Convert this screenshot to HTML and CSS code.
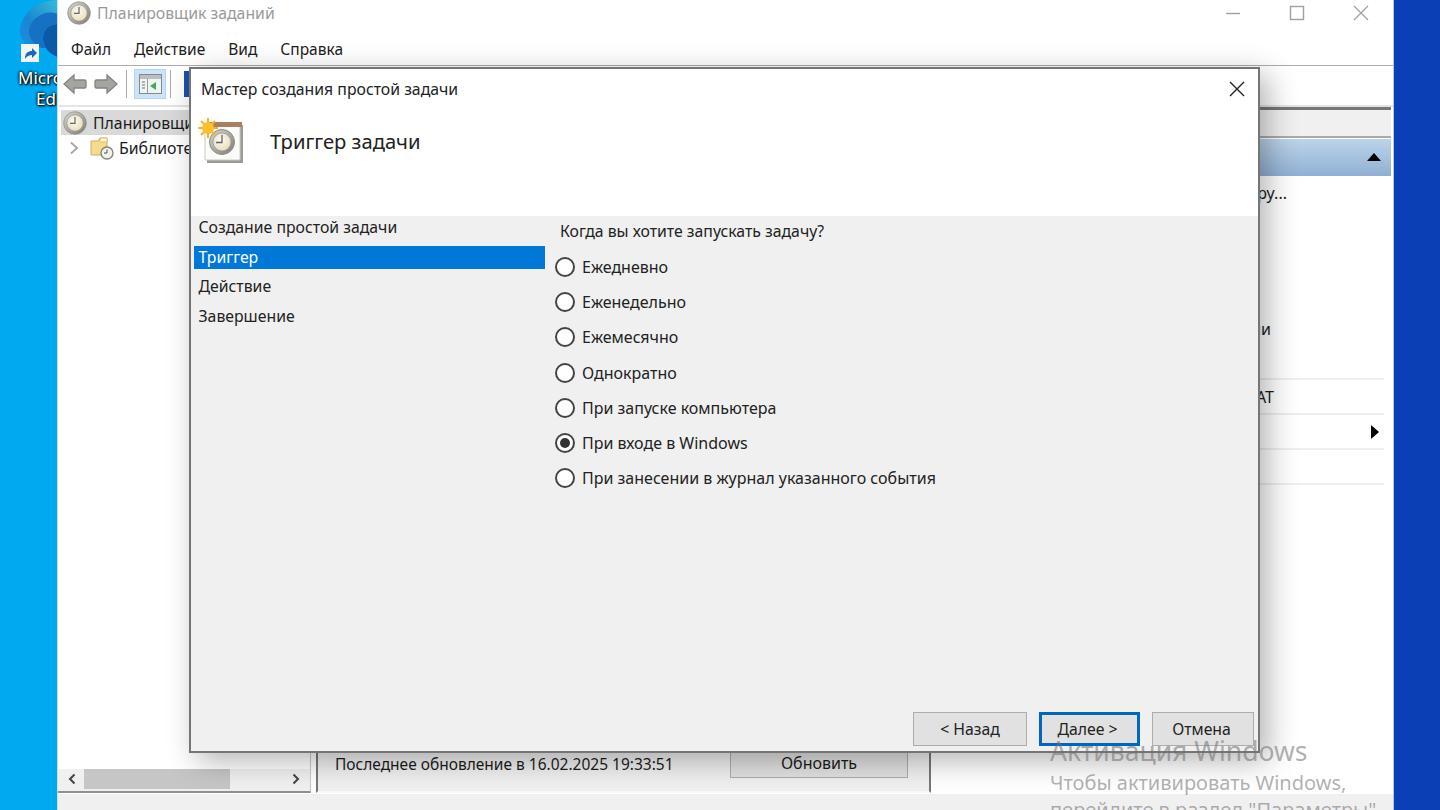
FILE: index.html
```html
<!DOCTYPE html>
<html lang="ru">
<head>
<meta charset="utf-8">
<title>Планировщик заданий</title>
<link rel="stylesheet" href="styles.css">
</head>
<body>
<svg class="defs" width="0" height="0" aria-hidden="true">
  <defs>
    <linearGradient id="ring" x1="0" y1="0" x2="1" y2="1"><stop offset="0" stop-color="#d8d8d4"/><stop offset="1" stop-color="#7d7d78"/></linearGradient>
    <radialGradient id="face" cx=".45" cy=".4" r=".7"><stop offset="0" stop-color="#fbfbf8"/><stop offset="1" stop-color="#e6d8b0"/></radialGradient>
    <linearGradient id="edgeA" x1="1" y1="0" x2="0" y2="1"><stop offset="0" stop-color="#35bcd6"/><stop offset=".6" stop-color="#1a86d2"/><stop offset="1" stop-color="#1a8fe0"/></linearGradient>
    <symbol id="clock" viewBox="0 0 24 24">
      <circle cx="12" cy="12" r="11.300" fill="url(#ring)" stroke="#8a8a86" stroke-width=".7"/>
      <circle cx="12" cy="12" r="8.200" fill="url(#face)" stroke="#8d8d88" stroke-width=".6"/>
      <path d="M12 6v6.300H7" fill="none" stroke="#66665f" stroke-width="1.200"/>
    </symbol>
  </defs>
</svg>
<div class="desktop">
  <div class="desk-icon">
    <svg class="edge" width="40" height="62" viewBox="0 0 40 62">
      <path d="M40 0C20 0 4 12 2 30c0 8 4 14 10 17 4 1 7 1 9 0C14 40 14 24 26 16c5-3 10-3 14-2Z" fill="url(#edgeA)"/>
      <path d="M40 24c-9 0-15 6-15 14 0 9 6 16 15 19Z" fill="#0b5aa8"/>
      <path d="M12 26C18 14 30 10 40 14v10c-9 0-15 6-15 14 0 4 1 7 3 10-2 0-5 0-7-1-8-5-12-13-9-21Z" fill="#1670c4"/>
    </svg>
    <svg class="shortcut" width="18" height="18" viewBox="0 0 18 18"><rect width="18" height="18" fill="#f2f5f8"/><path d="M4 15c0-6 3-8 7-8V4l5 5-5 5v-3c-3 0-5 1-7 4Z" fill="#1668b8"/></svg>
    <span class="desk-label">Micro<br><span class="desk-label-2">Ed</span></span>
  </div>

  <div class="window">
    <div class="titlebar">
      <svg class="title-clock" width="24" height="24"><use href="#clock"/></svg>
      <span class="title-text">Планировщик заданий</span>
      <div class="win-controls">
        <svg width="16" height="16" viewBox="0 0 16 16"><path d="M1 8.500h14" stroke="#a0a0a0" stroke-width="1.400"/></svg>
        <svg width="16" height="16" viewBox="0 0 16 16"><rect x="1.500" y="1.500" width="13" height="13" fill="none" stroke="#a0a0a0" stroke-width="1.400"/></svg>
        <svg width="16" height="16" viewBox="0 0 16 16"><path d="M1 1l14 14M15 1L1 15" stroke="#a0a0a0" stroke-width="1.200"/></svg>
      </div>
    </div>
    <nav class="menubar">
      <span>Файл</span><span>Действие</span><span>Вид</span><span>Справка</span>
    </nav>
    <div class="toolbar">
      <svg class="tool-arrow" width="24" height="22" viewBox="0 0 24 22"><path d="M1 11L11 2v5h11l1 1v6l-1 1H11v5Z" fill="#a4a4a0" stroke="#85857f" stroke-width="1.300"/></svg>
      <svg class="tool-arrow tool-next" width="24" height="22" viewBox="0 0 24 22"><path d="M23 11L13 2v5H2L1 8v6l1 1h11v5Z" fill="#a4a4a0" stroke="#85857f" stroke-width="1.300"/></svg>
      <i class="tool-sep tool-sep-a"></i>
      <span class="tool-active">
        <svg width="23" height="20" viewBox="0 0 23 20"><rect x=".5" y=".5" width="22" height="19" fill="#eef3f4" stroke="#85898c"/><path d="M1 1h21v4H1z" fill="#b9bec4"/><path d="M8.500 5v14" stroke="#9a9a9a"/><path d="M3 8h3M3 11h3M3 14h3" stroke="#6f6f6f"/><path d="M17 8v8l-6-4Z" fill="#4aa65a"/></svg>
      </span>
      <i class="tool-sep tool-sep-b"></i>
      <i class="tool-blue"></i>
    </div>
    <div class="panes">
      <div class="tree">
        <div class="tree-body">
          <div class="tree-row tree-root">
            <svg width="24" height="24"><use href="#clock"/></svg>
            <span>Планировщик заданий (Локальный)</span>
          </div>
          <div class="tree-row tree-child">
            <svg class="chev" width="10" height="14" viewBox="0 0 10 14"><path d="M2 1.500L8 7l-6 5.500" fill="none" stroke="#a6a6a6" stroke-width="1.800"/></svg>
            <svg class="folder" width="24" height="24" viewBox="0 0 24 24"><path d="M1 5h7l2-3h7v17H1Z" fill="#f3dc8f" stroke="#cfae5c"/><path d="M10 2h7v4h-7z" fill="#fbf3d2" stroke="#cfae5c" stroke-width=".6"/><circle cx="17" cy="17" r="6" fill="#f3f3ee" stroke="#85857f" stroke-width="1.400"/><path d="M17 13.500V17h-3" fill="none" stroke="#55554f"/></svg>
            <span>Библиотека планировщика заданий</span>
          </div>
        </div>
        <div class="hscroll">
          <svg width="10" height="12" viewBox="0 0 10 12"><path d="M7.500 1.500L3 6l4.500 4.500" fill="none" stroke="#444" stroke-width="2"/></svg>
          <i class="thumb"></i>
          <svg width="10" height="12" viewBox="0 0 10 12"><path d="M2.500 1.500L7 6l-4.500 4.500" fill="none" stroke="#444" stroke-width="2"/></svg>
        </div>
      </div>
      <div class="center">
        <div class="center-foot">
          <span class="updated">Последнее обновление в 16.02.2025 19:33:51</span>
          <span class="refresh">Обновить</span>
        </div>
      </div>
      <div class="actions">
        <div class="act-top"></div>
        <div class="act-head"><i class="tri-up"></i></div>
        <div class="act-row end-a">Подключиться к другому компьютеру...</div>
        <div class="act-row"></div>
        <div class="act-row"></div>
        <div class="act-row"></div>
        <div class="act-row end-b">Отобразить все выполняемые задачи</div>
        <div class="act-row act-line"></div>
        <div class="act-row act-tall act-line end-c">Конфигурация учетной записи службы AT</div>
        <div class="act-row act-tall act-line act-sub"><i class="tri-right"></i></div>
        <div class="act-row act-tall act-line"></div>
      </div>
    </div>
    <div class="statusbar"></div>
  </div>

  <section class="dialog">
    <header class="dlg-head">
      <div class="dlg-title">
        <span>Мастер создания простой задачи</span>
        <svg width="16" height="16" viewBox="0 0 16 16"><path d="M1 1l14 14M15 1L1 15" stroke="#222" stroke-width="1.400"/></svg>
      </div>
      <div class="dlg-hero">
        <svg class="hero-icon" width="46" height="46" viewBox="0 0 46 46">
          <path d="M8 7h36v38H8Z" fill="#9a9a96"/>
          <path d="M6 6h35v36H6Z" fill="#fbfbf8" stroke="#c9c9c4"/>
          <path d="M10 4h33v5H10Z" fill="#a87f63"/>
          <circle cx="23" cy="24" r="12.500" fill="url(#ring)" stroke="#8a8a86"/>
          <circle cx="23" cy="24" r="9" fill="url(#face)" stroke="#8d8d88" stroke-width=".6"/>
          <path d="M23 17v7.500h-6" fill="none" stroke="#66665f" stroke-width="1.300"/>
          <g stroke="#f6b21c" stroke-width="2"><path d="M9 0v20M-1 10h20M2 3l14 14M16 3L2 17"/></g>
          <circle cx="9" cy="10" r="6" fill="#fbc02d"/>
        </svg>
        <h1>Триггер задачи</h1>
      </div>
    </header>
    <div class="dlg-body">
      <aside class="steps">
        <div class="step step-first">Создание простой задачи</div>
        <div class="step step-on">Триггер</div>
        <div class="step">Действие</div>
        <div class="step">Завершение</div>
      </aside>
      <main class="form">
        <p class="question">Когда вы хотите запускать задачу?</p>
        <div class="radios">
          <div class="radio"><i class="dot"></i>Ежедневно</div>
          <div class="radio"><i class="dot"></i>Еженедельно</div>
          <div class="radio"><i class="dot"></i>Ежемесячно</div>
          <div class="radio"><i class="dot"></i>Однократно</div>
          <div class="radio"><i class="dot"></i>При запуске компьютера</div>
          <div class="radio"><i class="dot dot-on"></i>При входе в Windows</div>
          <div class="radio"><i class="dot"></i>При занесении в журнал указанного события</div>
        </div>
        <div class="buttons">
          <span class="btn btn-back">&lt; Назад</span>
          <span class="btn btn-next">Далее &gt;</span>
          <span class="btn btn-cancel">Отмена</span>
        </div>
      </main>
    </div>
  </section>

  <div class="watermark">
    <div class="wm-big">Активация Windows</div>
    <div class="wm-small">Чтобы активировать Windows,</div>
    <div class="wm-small">перейдите в раздел "Параметры".</div>
  </div>
</div>
</body>
</html>
```
FILE: styles.css
```css
* { box-sizing: border-box; }
html, body { margin: 0; height: 100%; overflow: hidden; }
body { font-family: "Noto Sans", "Open Sans", sans-serif; font-size: 15.800px; color: #1c1c1c; }
.defs { position: absolute; }
.desktop {
  position: relative; width: 1440px; height: 810px; overflow: hidden;
  background: linear-gradient(90deg, #00a9f0 0, #00a9f0 57px, #0a3fb6 57px);
}
.desk-icon { position: absolute; left: 0; top: 0; width: 57px; height: 110px; overflow: hidden; }
.edge { position: absolute; left: 18px; top: 0; }
.shortcut { position: absolute; left: 21px; top: 44px; }
.desk-label {
  position: absolute; left: 18px; top: 67px; width: 60px; color: #fff; font-size: 17px; line-height: 21px;
  text-shadow: 0 0 3px #000, 0 0 3px #000, 1px 1px 2px #000; white-space: nowrap;
}
.desk-label-2 { padding-left: 18px; }
.window {
  position: absolute; left: 57px; top: 0; width: 1337px; height: 810px;
  background: #fff; display: flex; flex-direction: column; overflow: hidden;
  border-right: 1px solid #b8c4d8; border-left: 1px solid #d5dbe5;
}
.titlebar { height: 33px; flex: none; display: flex; align-items: center; padding-left: 9px; padding-bottom: 7px; }
.title-clock { margin-right: 6px; flex: none; }
.title-text { color: #9a9a9a; font-size: 15.800px; }
.win-controls { margin-left: auto; display: flex; gap: 48px; padding-right: 24px; }
.menubar { height: 33px; flex: none; display: flex; gap: 23px; padding: 4px 0 0 13px; font-size: 15.500px; border-bottom: 1px solid #ababab; line-height: 24px; }
.toolbar {
  height: 41px; flex: none; display: flex; align-items: center; padding-left: 5px; padding-bottom: 4px;
  border-bottom: 2px solid #e4e4e4;
}
.tool-next { margin-left: 7px; }
.tool-sep { width: 1px; height: 28px; background: #a8a8a8; flex: none; }
.tool-sep-a { margin-left: 8px; }
.tool-sep-b { margin-left: 4px; }
.tool-active { width: 32px; height: 30px; margin-left: 7px; background: #cde4f7; display: flex; align-items: center; justify-content: center; border: 1px solid #b5d6f2; }
.tool-blue { width: 14px; height: 26px; margin-left: 13px; background: #1e4fa8; }
.panes { flex: 1; min-height: 0; display: flex; }
.tree { width: 253px; flex: none; display: flex; flex-direction: column; border-bottom: 2px solid #8f8f8f; border-right: 1px solid #c8c8c8; margin-bottom: 1px; padding-top: 3px; }
.tree-body { flex: 1; min-height: 0; overflow: hidden; }
.tree-row { display: flex; align-items: center; height: 25px; white-space: nowrap; }
.tree-row svg { flex: none; }
.tree-root { background: #d9d9d9; margin-left: 3px; padding-left: 2px; gap: 6px; }
.tree-child { padding-left: 11px; }
.folder { margin-left: 11px; margin-right: 5px; }
.hscroll { height: 22px; flex: none; background: #f0f0f0; display: flex; align-items: center; padding: 0 9px 2px 9px; }
.thumb { width: 146px; height: 20px; background: #c6c6c6; margin-left: 7px; margin-right: auto; }
.center { width: 615px; flex: none; margin-left: 5px; display: flex; flex-direction: column; justify-content: flex-end; background: #f0f0f0; border-left: 2px solid #777; border-right: 2px solid #777; border-bottom: 2px solid #f8f8f8; margin-bottom: 1px; }
.center-foot { height: 30px; display: flex; align-items: center; padding: 0 21px 0 17px; font-size: 15.500px; margin-bottom: 13px; white-space: nowrap; }
.updated { padding-top: 2px; }
.refresh { margin-left: auto; width: 178px; height: 30px; background: #e1e1e1; border: 1px solid #adadad; text-align: center; line-height: 28px; font-size: 16px; }
.actions { flex: 1; display: flex; flex-direction: column; padding-right: 2px; }
.act-top { height: 31px; flex: none; background: #f0f0f0; border-top: 3px solid #777; border-bottom: 2px solid #aaa; }
.act-head { height: 37px; flex: none; margin-top: 1px; background: linear-gradient(#bcd4ea, #90b0d3); position: relative; }
.tri-up { position: absolute; right: 10px; top: 14px; width: 0; height: 0; border-left: 7px solid transparent; border-right: 7px solid transparent; border-bottom: 8px solid #000; }
.act-row { height: 34px; flex: none; display: flex; align-items: center; justify-content: flex-end; white-space: nowrap; overflow: hidden; font-size: 16px; position: relative; }
.end-a { padding-right: 104px; }
.end-b { padding-right: 120px; }
.act-tall { height: 35px; }
.act-line { border-bottom: 2px solid #eeeeee; margin-right: 7px; }
.act-line.end-c { padding-right: 110px; }
.tri-right { position: absolute; right: 5px; top: 10px; width: 0; height: 0; border-top: 7px solid transparent; border-bottom: 7px solid transparent; border-left: 8px solid #000; }
.statusbar { height: 16px; flex: none; background: #f0f0f0; }

.dialog {
  position: absolute; left: 189px; top: 67px; width: 1071px; height: 686px;
  background: #f0f0f0; border: 2px solid #757575;
  box-shadow: 8px 8px 28px rgba(0,0,0,.3); display: flex; flex-direction: column;
}
.dlg-head { height: 147px; flex: none; background: #fff; }
.dlg-title { display: flex; align-items: center; justify-content: space-between; padding: 4px 13px 0 10px; height: 36px; color: #222; }
.dlg-hero { display: flex; align-items: center; padding-left: 8px; height: 46px; margin-top: 13px; }
.hero-icon { flex: none; overflow: visible; }
.dlg-hero h1 { margin: 0 0 0 25px; font-size: 20.200px; font-weight: 400; color: #222; }
.dlg-body { flex: 1; min-height: 0; display: flex; }
.steps { width: 354px; flex: none; padding: 0 0 0 3px; }
.step { height: 29.500px; padding-left: 4.500px; display: flex; align-items: center; color: #222; }
.step-first { height: 30px; padding-bottom: 8px; }
.step-on { background: #0078d7; color: #fff; height: 23px; margin-bottom: 2.500px; padding-bottom: 1px; }
.form { flex: 1; display: flex; flex-direction: column; padding: 0 4px 5px 15px; }
.question { margin: 3px 0 0; height: 24px; line-height: 24px; color: #222; }
.radios { margin-top: 6.400px; margin-left: -5px; }
.radio { height: 35.200px; display: flex; align-items: center; gap: 7px; color: #222; white-space: nowrap; font-size: 16px; }
.dot { width: 20px; height: 20px; border: 2px solid #444; border-radius: 50%; background: #fff; flex: none; position: relative; }
.dot-on::after { content: ""; position: absolute; inset: 3px; border-radius: 50%; background: #333; }
.buttons { margin-top: auto; display: flex; justify-content: flex-end; gap: 12px; }
.btn { height: 34px; background: #e1e1e1; border: 1px solid #adadad; display: flex; align-items: center; justify-content: center; color: #222; }
.btn-back { width: 114px; }
.btn-next { width: 101px; border: 3px solid #0067c0; padding-right: 4px; }
.btn-cancel { width: 102px; padding-right: 3px; }

.watermark { position: absolute; left: 1050px; top: 733px; color: rgba(110,110,110,.55); white-space: nowrap; }
.wm-big { font-size: 26.500px; line-height: 36px; }
.wm-small { font-size: 20px; line-height: 27px; }
```
